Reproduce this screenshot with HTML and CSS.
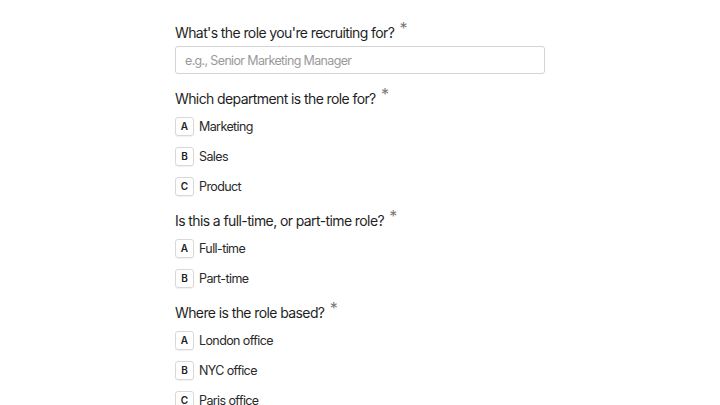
FILE: index.html
```html
<!DOCTYPE html>
<html lang="en">
<head>
  <meta charset="UTF-8" />
  <meta name="viewport" content="width=device-width, initial-scale=1.0"/>
  <title>Job Brief</title>
  <link rel="stylesheet" href="styles.css">
</head>
<body>

<form class="brief-form">
  <div class="question">
    <label class="question-title" for="role">What's the role you're recruiting for? <span class="req">*</span></label>
    <input type="text" id="role" class="text-input" placeholder="e.g., Senior Marketing Manager" />
  </div>

  <div class="question">
    <div class="question-title">Which department is the role for? <span class="req">*</span></div>
    <ul class="options">
      <li class="option"><span class="key">A</span>Marketing</li>
      <li class="option"><span class="key">B</span>Sales</li>
      <li class="option"><span class="key">C</span>Product</li>
    </ul>
  </div>

  <div class="question">
    <div class="question-title">Is this a full-time, or part-time role? <span class="req">*</span></div>
    <ul class="options">
      <li class="option"><span class="key">A</span>Full-time</li>
      <li class="option"><span class="key">B</span>Part-time</li>
    </ul>
  </div>

  <div class="question">
    <div class="question-title">Where is the role based? <span class="req">*</span></div>
    <ul class="options">
      <li class="option"><span class="key">A</span>London office</li>
      <li class="option"><span class="key">B</span>NYC office</li>
      <li class="option"><span class="key">C</span>Paris office</li>
    </ul>
  </div>
</form>

</body>
</html>
```

FILE: styles.css
```css
body {
  margin: 0;
  font-family: Inter, "Noto Sans", sans-serif;
  background: #fff;
  color: #262626;
}
.brief-form {
  width: 370px;
  margin: 0 auto;
  padding-top: 23px;
}
.question {
  margin-bottom: 15px;
}
.question-title {
  display: block;
  font-size: 14px;
  letter-spacing: -0.6px;
  line-height: 20px;
  margin-bottom: 8px;
  color: #1f1f1f;
}
.question:first-child .question-title {
  margin-bottom: 3px;
}
.req {
  color: #7a7a7a;
  font-size: 16px;
  line-height: 0;
  position: relative;
  top: -4px;
  margin-left: 2px;
}
.text-input {
  display: block;
  width: 100%;
  height: 28px;
  box-sizing: border-box;
  padding: 0 9px;
  border: 1px solid #d4d4d4;
  border-radius: 3px;
  font-family: inherit;
  font-size: 12.5px;
  letter-spacing: -0.65px;
  color: #222;
}
.text-input::placeholder {
  color: #9a9a9a;
}
.options {
  list-style: none;
  margin: 0;
  padding: 0;
  display: flex;
  flex-direction: column;
  gap: 11px;
}
.option {
  display: flex;
  align-items: center;
  gap: 5px;
  font-size: 12.5px;
  letter-spacing: -0.6px;
  line-height: 19px;
  color: #2a2a2a;
}
.key {
  width: 19px;
  height: 19px;
  box-sizing: border-box;
  border: 1px solid #d8d8d8;
  border-radius: 3px;
  box-shadow: 0 1px 1px rgba(0,0,0,0.06);
  display: flex;
  align-items: center;
  justify-content: center;
  font-size: 10px;
  font-weight: 600;
  letter-spacing: 0;
  color: #222;
}
```
